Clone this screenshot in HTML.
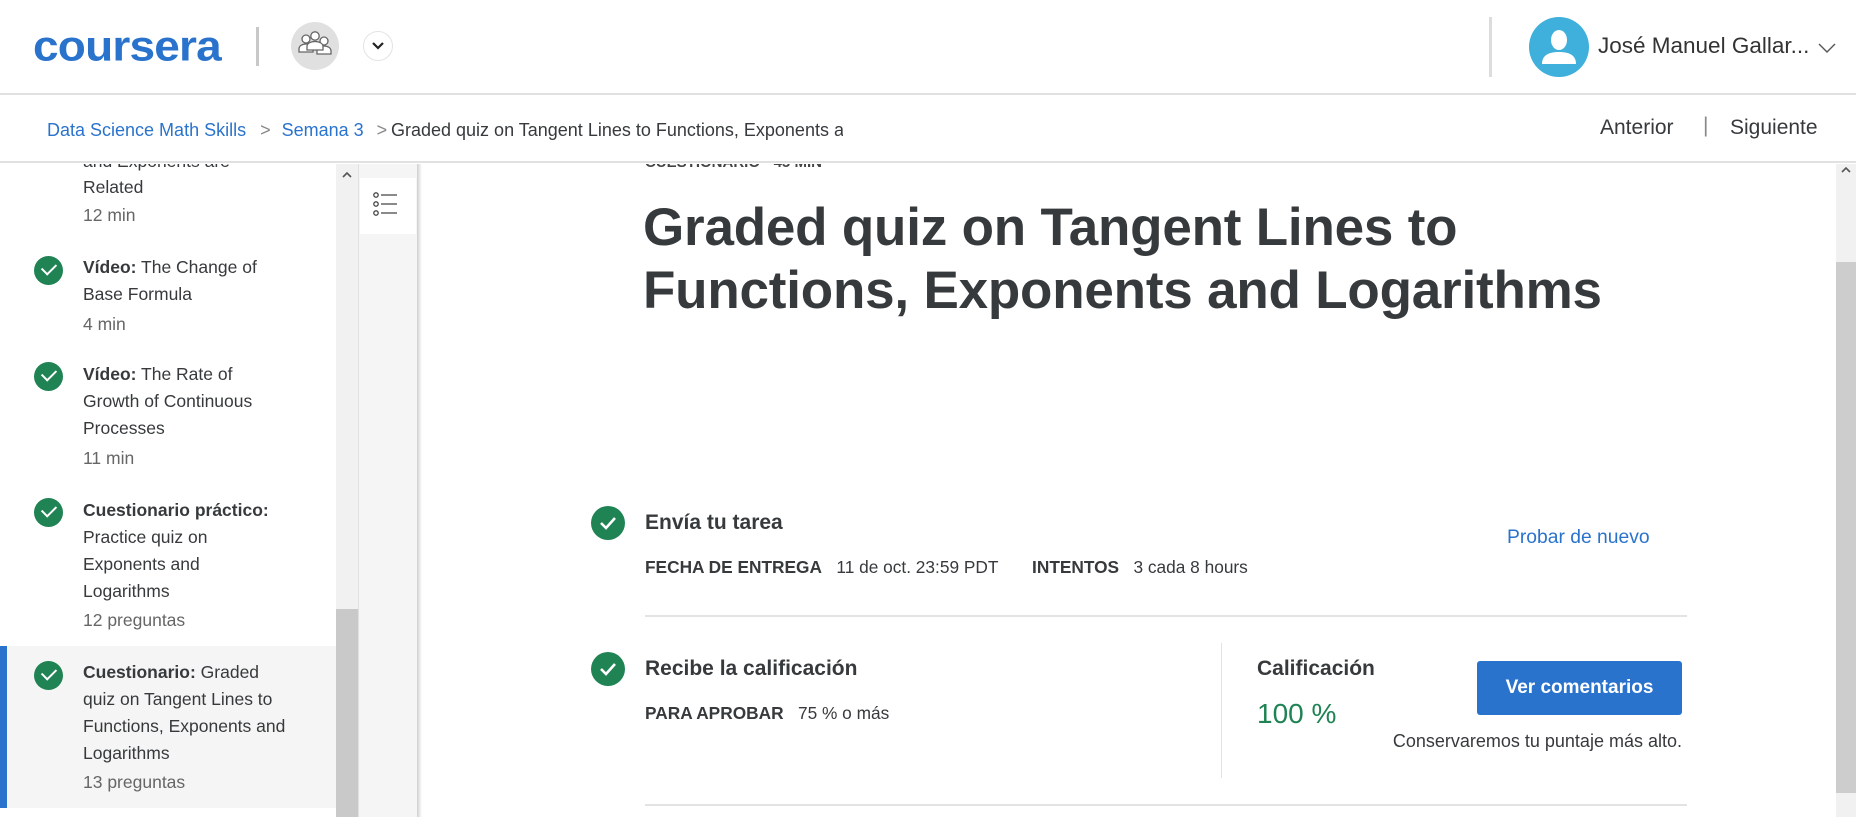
<!DOCTYPE html>
<html><head><meta charset="utf-8"><style>
*{margin:0;padding:0;box-sizing:border-box}
body{width:1856px;height:817px;overflow:hidden;background:#fff;font-family:"Liberation Sans",sans-serif;color:#373a3c;position:relative}
.a{position:absolute;white-space:nowrap}
.chk{position:absolute;border-radius:50%;background:#1f8354}
.chk svg{position:absolute;left:0;top:0}
.sb{font-size:17.5px;color:#373a3c;line-height:27px}
.sb b{color:#373a3c}
.m{color:#666}
</style></head><body>
<!-- header -->
<div class="a" style="left:0;top:0;width:1856px;height:95px;border-bottom:2px solid #e1e1e1"></div>
<div class="a" style="left:33px;top:20px;font-size:46px;font-weight:bold;color:#2a73cc;letter-spacing:-0.8px;line-height:52px;transform:scaleY(0.92);transform-origin:left center">coursera</div>
<div class="a" style="left:256px;top:27px;width:3px;height:39px;background:#c8c8c8"></div>
<div class="a" style="left:291px;top:22px;width:48px;height:48px;border-radius:50%;background:#e0e0e0"></div>
<svg class="a" style="left:297px;top:30px" width="36" height="30" viewBox="0 0 36 30" fill="#fff" stroke="#666" stroke-width="1.3"><circle cx="9" cy="9" r="4"/><path d="M2 22v-3c0-3 3-5 7-5s7 2 7 5v3z"/><circle cx="27" cy="11" r="4"/><path d="M20 24v-3c0-3 3-5 7-5s7 2 7 5v3z"/><circle cx="18" cy="6" r="4.2"/><path d="M10 20v-3.5c0-3 3.5-5 8-5s8 2 8 5V20z"/></svg>
<div class="a" style="left:363px;top:31px;width:30px;height:30px;border-radius:50%;border:1px solid #e3e3e3"></div>
<svg class="a" style="left:371px;top:40px" width="14" height="12" viewBox="0 0 14 12"><path d="M2 3l5 5 5-5" fill="none" stroke="#222" stroke-width="2.2"/></svg>
<div class="a" style="left:1489px;top:17px;width:3px;height:60px;background:#dcdcdc"></div>
<div class="a" style="left:1529px;top:17px;width:60px;height:60px;border-radius:50%;background:#3fafdb;overflow:hidden">
<svg width="60" height="60" viewBox="0 0 60 60" fill="#fff"><ellipse cx="30" cy="23" rx="8" ry="10"/><path d="M13 47c0-9 7-12 17-12s17 3 17 12z"/></svg></div>
<div class="a" style="left:1598px;top:33px;font-size:22.5px;color:#333">José Manuel Gallar...</div>
<svg class="a" style="left:1818px;top:42px" width="18" height="12" viewBox="0 0 18 12"><path d="M1 2l8 8 8-8" fill="none" stroke="#555" stroke-width="1.4"/></svg>
<!-- breadcrumb -->
<div class="a" style="left:0;top:95px;width:1856px;height:68px;border-bottom:2px solid #e1e1e1"></div>
<div class="a" style="left:47px;top:118px;font-size:18px;line-height:24px"><span style="color:#2a73cc">Data Science Math Skills</span><span style="color:#888;margin:0 11px 0 14px">&gt;</span><span style="color:#2a73cc">Semana 3</span><span style="color:#888;margin:0 12px 0 13px">&gt;</span></div>
<div class="a" style="left:391px;top:118px;font-size:18px;line-height:24px;width:452px;overflow:hidden;color:#373a3c">Graded quiz on Tangent Lines to Functions, Exponents and Logarithms</div>
<div class="a" style="left:1600px;top:116px;font-size:21px;color:#373a3c">Anterior</div>
<div class="a" style="left:1703px;top:114px;font-size:21px;color:#888">|</div>
<div class="a" style="left:1730px;top:116px;font-size:21px;color:#373a3c">Siguiente</div>
<!-- sidebar -->
<div class="a" style="left:0;top:164px;width:336px;height:653px;overflow:hidden">
<div class="a sb" style="left:83px;top:-16px">and Exponents are</div>
<div class="a sb" style="left:83px;top:10px">Related</div>
<div class="a sb m" style="left:83px;top:38px">12 min</div>
<div class="chk" style="left:34px;top:92px;width:29px;height:29px"></div>
<div class="a sb" style="left:83px;top:90px"><b>Vídeo:</b> The Change of<br>Base Formula</div>
<div class="a sb m" style="left:83px;top:147px">4 min</div>
<div class="chk" style="left:34px;top:198px;width:29px;height:29px"></div>
<div class="a sb" style="left:83px;top:197px"><b>Vídeo:</b> The Rate of<br>Growth of Continuous<br>Processes</div>
<div class="a sb m" style="left:83px;top:281px">11 min</div>
<div class="chk" style="left:34px;top:334px;width:29px;height:29px"></div>
<div class="a sb" style="left:83px;top:333px"><b>Cuestionario práctico:</b><br>Practice quiz on<br>Exponents and<br>Logarithms</div>
<div class="a sb m" style="left:83px;top:443px">12 preguntas</div>
<div class="a" style="left:0;top:482px;width:336px;height:162px;background:#f5f5f5;border-left:7px solid #2a73cc"></div>
<div class="chk" style="left:34px;top:497px;width:29px;height:29px"></div>
<div class="a sb" style="left:83px;top:495px"><b>Cuestionario:</b> Graded<br>quiz on Tangent Lines to<br>Functions, Exponents and<br>Logarithms</div>
<div class="a sb m" style="left:83px;top:605px">13 preguntas</div>
</div>
<div class="a" style="left:336px;top:164px;width:22px;height:653px;background:#f1f1f1"></div>
<div class="a" style="left:336px;top:609px;width:22px;height:208px;background:#c9c9c9"></div>
<svg class="a" style="left:341px;top:171px" width="12" height="8" viewBox="0 0 12 8"><path d="M2 6l4-4 4 4" fill="none" stroke="#555" stroke-width="1.6"/></svg>
<div class="a" style="left:358px;top:164px;width:59px;height:653px;background:#f5f5f5;border-left:1px solid #e0e0e0"></div>
<div class="a" style="left:360px;top:178px;width:56px;height:56px;background:#fff"></div>
<svg class="a" style="left:372px;top:190px" width="28" height="28" viewBox="0 0 28 28" fill="none" stroke="#444" stroke-width="1.3"><circle cx="4" cy="5" r="2.2"/><circle cx="4" cy="14" r="2.2"/><circle cx="4" cy="23" r="2.2"/><path d="M9 5h16M9 14h16M9 23h16"/></svg>
<div class="a" style="left:417px;top:164px;width:5px;height:653px;background:linear-gradient(to right,#d0d0d0,#fff)"></div>
<!-- main scrollbar -->
<div class="a" style="left:1836px;top:164px;width:20px;height:653px;background:#f1f1f1"></div>
<div class="a" style="left:1836px;top:262px;width:20px;height:531px;background:#cdcdcd"></div>
<svg class="a" style="left:1840px;top:166px" width="12" height="8" viewBox="0 0 12 8"><path d="M2 6l4-4 4 4" fill="none" stroke="#555" stroke-width="1.6"/></svg>
<!-- main -->
<div class="a" style="left:645px;top:164px;height:10px;overflow:hidden;width:400px"><div style="font-size:15px;font-weight:bold;color:#444;margin-top:-10px">CUESTIONARIO • 45 MIN</div></div>
<div class="a" style="left:643px;top:196px;font-size:53px;font-weight:bold;color:#373a3c;line-height:63px;letter-spacing:-0.2px">Graded quiz on Tangent Lines to<br>Functions, Exponents and Logarithms</div>
<div class="chk" style="left:591px;top:506px;width:34px;height:34px"><svg width="34" height="34" viewBox="0 0 34 34"><path d="M10 17l5 5 9-10" fill="none" stroke="#fff" stroke-width="2.6"/></svg></div>
<div class="a" style="left:645px;top:511px;font-size:21px;font-weight:bold">Envía tu tarea</div>
<div class="a" style="left:645px;top:557px;font-size:17.3px"><b>FECHA DE ENTREGA</b>&nbsp;&nbsp; 11 de oct. 23:59 PDT&nbsp;&nbsp;&nbsp;&nbsp;&nbsp;&nbsp; <b>INTENTOS</b>&nbsp;&nbsp; 3 cada 8 hours</div>
<div class="a" style="left:1507px;top:527px;font-size:19.3px;color:#2a73cc">Probar de nuevo</div>
<div class="a" style="left:645px;top:615px;width:1042px;height:2px;background:#e3e3e3"></div>
<div class="chk" style="left:591px;top:652px;width:34px;height:34px"><svg width="34" height="34" viewBox="0 0 34 34"><path d="M10 17l5 5 9-10" fill="none" stroke="#fff" stroke-width="2.6"/></svg></div>
<div class="a" style="left:645px;top:657px;font-size:21px;font-weight:bold">Recibe la calificación</div>
<div class="a" style="left:645px;top:703px;font-size:17.3px"><b>PARA APROBAR</b>&nbsp;&nbsp; 75 % o más</div>
<div class="a" style="left:1221px;top:643px;width:1px;height:135px;background:#e3e3e3"></div>
<div class="a" style="left:1257px;top:657px;font-size:21px;font-weight:bold">Calificación</div>
<div class="a" style="left:1257px;top:698px;font-size:28px;color:#1f8354">100 %</div>
<div class="a" style="left:1477px;top:661px;width:205px;height:54px;background:#2a73cc;border-radius:3px;color:#fff;font-size:19px;font-weight:bold;text-align:center;line-height:54px">Ver comentarios</div>
<div class="a" style="left:1280px;top:731px;width:402px;text-align:right;font-size:18px">Conservaremos tu puntaje más alto.</div>
<div class="a" style="left:645px;top:804px;width:1042px;height:2px;background:#e3e3e3"></div>
<style>.chk:not(:has(svg))::after{content:"";position:absolute;left:8px;top:7px;width:12px;height:7px;border-left:2.5px solid #fff;border-bottom:2.5px solid #fff;transform:rotate(-45deg)}</style>
</body></html>
